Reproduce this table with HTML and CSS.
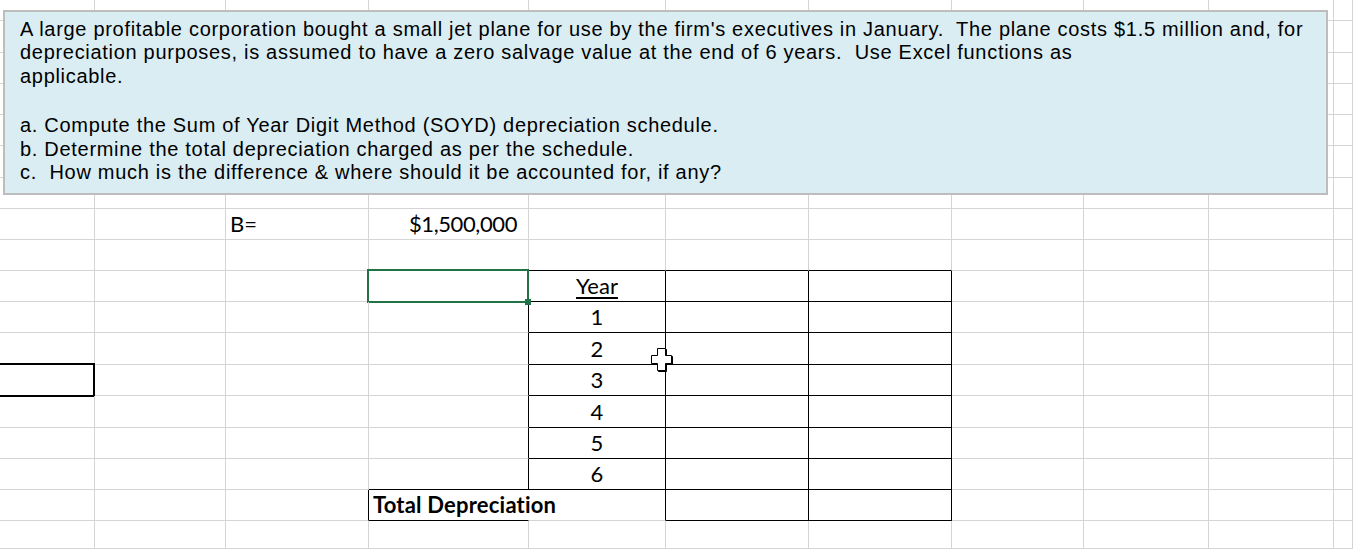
FILE: index.html
```html
<!DOCTYPE html>
<html lang="en">
<head>
<meta charset="utf-8">
<title>SOYD Depreciation</title>
<link rel="stylesheet" href="styles.css">
</head>
<body>
<div class="sheet">
  <!-- row 0 -->
  <div class="c"></div><div class="c"></div><div class="c"></div><div class="c"></div><div class="c"></div><div class="c"></div><div class="c"></div><div class="c"></div><div class="c"></div><div class="c"></div><div class="c"></div>
  <!-- row 1 -->
  <div class="c"></div><div class="c"></div><div class="c"></div><div class="c"></div><div class="c"></div><div class="c"></div><div class="c"></div><div class="c"></div><div class="c"></div><div class="c"></div><div class="c"></div>
  <!-- row 2 -->
  <div class="c"></div><div class="c"></div><div class="c"></div><div class="c"></div><div class="c"></div><div class="c"></div><div class="c"></div><div class="c"></div><div class="c"></div><div class="c"></div><div class="c"></div>
  <!-- row 3 -->
  <div class="c"></div><div class="c"></div><div class="c"></div><div class="c"></div><div class="c"></div><div class="c"></div><div class="c"></div><div class="c"></div><div class="c"></div><div class="c"></div><div class="c"></div>
  <!-- row 4 -->
  <div class="c"></div><div class="c"></div><div class="c"></div><div class="c"></div><div class="c"></div><div class="c"></div><div class="c"></div><div class="c"></div><div class="c"></div><div class="c"></div><div class="c"></div>
  <!-- row 5 -->
  <div class="c"></div><div class="c"></div><div class="c"></div><div class="c"></div><div class="c"></div><div class="c"></div><div class="c"></div><div class="c"></div><div class="c"></div><div class="c"></div><div class="c"></div>
  <!-- row 6 -->
  <div class="c"></div><div class="c"></div><div class="c"></div><div class="c"></div><div class="c"></div><div class="c"></div><div class="c"></div><div class="c"></div><div class="c"></div><div class="c"></div><div class="c"></div>
  <!-- row 7 : B= -->
  <div class="c"></div><div class="c"></div><div class="c left">B=</div><div class="c right">$1,500,000</div><div class="c"></div><div class="c"></div><div class="c"></div><div class="c"></div><div class="c"></div><div class="c"></div><div class="c"></div>
  <!-- row 8 -->
  <div class="c"></div><div class="c"></div><div class="c"></div><div class="c"></div><div class="c bb"></div><div class="c bb"></div><div class="c bb"></div><div class="c"></div><div class="c"></div><div class="c"></div><div class="c"></div>
  <!-- row 9 : Year -->
  <div class="c"></div><div class="c"></div><div class="c"></div><div class="c br selected"><span class="handle"></span></div><div class="c bb br center"><span class="ul">Year</span></div><div class="c bb br"></div><div class="c bb br"></div><div class="c"></div><div class="c"></div><div class="c"></div><div class="c"></div>
  <!-- row 10 : 1 -->
  <div class="c"></div><div class="c"></div><div class="c"></div><div class="c br"></div><div class="c bb br center">1</div><div class="c bb br"></div><div class="c bb br"></div><div class="c"></div><div class="c"></div><div class="c"></div><div class="c"></div>
  <!-- row 11 : 2 -->
  <div class="c"></div><div class="c"></div><div class="c"></div><div class="c br"></div><div class="c bb br center">2</div><div class="c bb br"></div><div class="c bb br"></div><div class="c"></div><div class="c"></div><div class="c"></div><div class="c"></div>
  <!-- row 12 : 3 -->
  <div class="c boxed"></div><div class="c"></div><div class="c"></div><div class="c br"></div><div class="c bb br center">3</div><div class="c bb br"></div><div class="c bb br"></div><div class="c"></div><div class="c"></div><div class="c"></div><div class="c"></div>
  <!-- row 13 : 4 -->
  <div class="c"></div><div class="c"></div><div class="c"></div><div class="c br"></div><div class="c bb br center">4</div><div class="c bb br"></div><div class="c bb br"></div><div class="c"></div><div class="c"></div><div class="c"></div><div class="c"></div>
  <!-- row 14 : 5 -->
  <div class="c"></div><div class="c"></div><div class="c"></div><div class="c br"></div><div class="c bb br center">5</div><div class="c bb br"></div><div class="c bb br"></div><div class="c"></div><div class="c"></div><div class="c"></div><div class="c"></div>
  <!-- row 15 : 6 -->
  <div class="c"></div><div class="c"></div><div class="c"></div><div class="c br bb"></div><div class="c bb br center">6</div><div class="c bb br"></div><div class="c bb br"></div><div class="c"></div><div class="c"></div><div class="c"></div><div class="c"></div>
  <!-- row 16 : Total -->
  <div class="c"></div><div class="c"></div><div class="c br"></div><div class="c bb nr left bold">Total Depreciation</div><div class="c br"></div><div class="c bb br"></div><div class="c bb br"></div><div class="c"></div><div class="c"></div><div class="c"></div><div class="c"></div>
  <!-- row 17 -->
  <div class="c"></div><div class="c"></div><div class="c"></div><div class="c"></div><div class="c"></div><div class="c"></div><div class="c"></div><div class="c"></div><div class="c"></div><div class="c"></div><div class="c"></div>

  <div class="textbox">
    <p class="tb-para">A large profitable corporation bought a small jet plane for use by the firm's executives in January.&nbsp; The plane costs $1.5 million and, for<br>depreciation purposes, is assumed to have a zero salvage value at the end of 6 years.&nbsp; Use Excel functions as<br>applicable.</p>
    <p class="tb-para tb-list">a. Compute the Sum of Year Digit Method (SOYD) depreciation schedule.<br>b. Determine the total depreciation charged as per the schedule.<br>c.&nbsp; How much is the difference &amp; where should it be accounted for, if any?</p>
  </div>

  <svg class="cursor" width="26" height="27" viewBox="0 0 26 27" aria-hidden="true">
    <path d="M8.5 3.5 H16.5 V10.5 H22.5 V18.5 H16.5 V25.5 H8.5 V18.5 H2.5 V10.5 H8.5 Z" fill="#000" stroke="#000" stroke-width="1"/>
    <path d="M7.5 2.5 H15.5 V9.5 H21.5 V17.5 H15.5 V24.5 H7.5 V17.5 H1.5 V9.5 H7.5 Z" fill="#fff" stroke="#000" stroke-width="1"/>
  </svg>
</div>
</body>
</html>
```
FILE: styles.css
```css
html, body {
  margin: 0;
  padding: 0;
  background: #fff;
}

body {
  width: 1353px;
  height: 549px;
  overflow: hidden;
}

.sheet {
  position: relative;
  display: grid;
  grid-template-columns: 95px 131px 143px 160px 137px 143px 143px 132px 125px 125px 1fr;
  grid-template-rows: 21px 32px 31px 31px 31px 32px 31px 31px 31px 31px 31px 32px 31px 32px 31px 31px 31px 28px;
  width: 1353px;
  height: 549px;
  font-family: Lato, "Open Sans", sans-serif;
  font-size: 22px;
  color: #000;
}

.c {
  box-sizing: border-box;
  border-right: 1px solid #d4d4d4;
  border-bottom: 1px solid #d4d4d4;
  display: flex;
  align-items: flex-end;
  padding: 0 0 3px 0;
  line-height: 24px;
  white-space: nowrap;
  position: relative;
}

.bb { border-bottom-color: #000; }
.br { border-right-color: #000; }
.nr { border-right-color: transparent; overflow: visible; z-index: 1; }

.left { justify-content: flex-start; padding-left: 4px; }
.right { justify-content: flex-end; padding-right: 11px; letter-spacing: -0.4px; }
.center { justify-content: center; }
.bold { font-weight: 700; letter-spacing: 0.2px; }

.ul {
  text-decoration: underline;
  text-decoration-thickness: 2px;
  text-underline-offset: 3px;
}

.selected::after {
  content: "";
  position: absolute;
  left: -2px;
  top: -2px;
  right: -1px;
  bottom: -2px;
  border: 2px solid #217346;
  pointer-events: none;
}

.handle {
  position: absolute;
  right: -3px;
  bottom: -4px;
  width: 6px;
  height: 6px;
  background: #217346;
  z-index: 2;
}

.boxed::after {
  content: "";
  position: absolute;
  left: -3px;
  top: -2px;
  right: -1px;
  bottom: -2px;
  border: 2px solid #000;
}

.textbox {
  position: absolute;
  left: 3px;
  top: 10px;
  width: 1325px;
  height: 185px;
  box-sizing: border-box;
  border: 2px solid #bdbdbd;
  background: #daedf3;
  padding: 6px 0 0 15px;
  font-family: "Liberation Sans", Arial, sans-serif;
  font-size: 20px;
  letter-spacing: 0.7px;
  line-height: 23.4px;
  color: #000;
  white-space: nowrap;
  z-index: 3;
}

.tb-para {
  margin: 0;
}

.tb-list {
  margin-top: 26px;
}

.cursor {
  position: absolute;
  left: 650px;
  top: 346px;
  z-index: 4;
}
```
